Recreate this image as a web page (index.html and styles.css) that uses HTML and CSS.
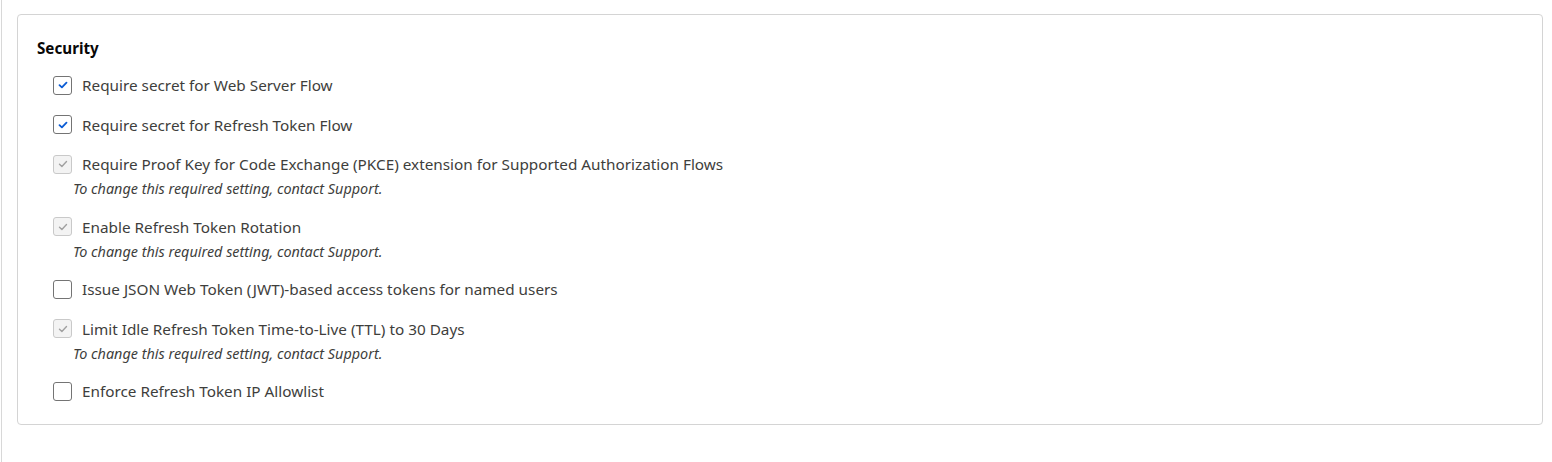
FILE: index.html
```html
<!DOCTYPE html>
<html lang="en">
<head>
    <meta charset="UTF-8">
    <meta name="viewport" content="width=device-width, initial-scale=1.0">
    <title>Security</title>
    <link rel="stylesheet" href="styles.css">
</head>
<body>
    <div class="page">
        <div class="card">
            <h2>Security</h2>

            <div class="options">
                <div class="option">
                    <label class="row">
                        <span class="box checked">
                            <svg viewBox="0 0 10 8"><path d="M1.5 4.2 L3.9 6.4 L8.5 1.6"/></svg>
                        </span>
                        Require secret for Web Server Flow
                    </label>
                </div>

                <div class="option">
                    <label class="row">
                        <span class="box checked">
                            <svg viewBox="0 0 10 8"><path d="M1.5 4.2 L3.9 6.4 L8.5 1.6"/></svg>
                        </span>
                        Require secret for Refresh Token Flow
                    </label>
                </div>

                <div class="option">
                    <label class="row">
                        <span class="box disabled">
                            <svg viewBox="0 0 10 8"><path d="M1.5 4.2 L3.9 6.4 L8.5 1.6"/></svg>
                        </span>
                        Require Proof Key for Code Exchange (PKCE) extension for Supported Authorization Flows
                    </label>
                    <p class="help">To change this required setting, contact Support.</p>
                </div>

                <div class="option">
                    <label class="row">
                        <span class="box disabled">
                            <svg viewBox="0 0 10 8"><path d="M1.5 4.2 L3.9 6.4 L8.5 1.6"/></svg>
                        </span>
                        Enable Refresh Token Rotation
                    </label>
                    <p class="help">To change this required setting, contact Support.</p>
                </div>

                <div class="option">
                    <label class="row">
                        <span class="box"></span>
                        Issue JSON Web Token (JWT)-based access tokens for named users
                    </label>
                </div>

                <div class="option">
                    <label class="row">
                        <span class="box disabled">
                            <svg viewBox="0 0 10 8"><path d="M1.5 4.2 L3.9 6.4 L8.5 1.6"/></svg>
                        </span>
                        Limit Idle Refresh Token Time-to-Live (TTL) to 30 Days
                    </label>
                    <p class="help">To change this required setting, contact Support.</p>
                </div>

                <div class="option">
                    <label class="row">
                        <span class="box"></span>
                        Enforce Refresh Token IP Allowlist
                    </label>
                </div>
            </div>
        </div>
    </div>
</body>
</html>
```

FILE: styles.css
```css
body {
    margin: 0;
    padding-left: 1px;
    font-family: 'Noto Sans', 'Open Sans', sans-serif;
    color: #3e3e3c;
    background-color: white;
}

.page {
    min-height: 462px;
    box-sizing: border-box;
    border-left: 1px solid #d8d8d8;
    padding: 14px 9px 0 15px;
}

.card {
    border: 1px solid #d4d4d4;
    border-radius: 4px;
    padding: 23px 19px 22px 19px;
}

h2 {
    margin: 0 0 16px 0;
    font-size: 15.2px;
    line-height: 20px;
    font-weight: bold;
    color: #080707;
}

.options {
    display: flex;
    flex-direction: column;
    gap: 17.5px;
    padding-left: 16px;
}

.row {
    display: flex;
    align-items: center;
    height: 22px;
    font-size: 15.3px;
}

.box {
    width: 19px;
    height: 19px;
    box-sizing: border-box;
    border: 1px solid #747474;
    border-radius: 3px;
    margin-right: 10px;
    display: flex;
    align-items: center;
    justify-content: center;
}

.box svg {
    width: 10px;
    height: 8px;
    fill: none;
    stroke: #0b5cd5;
    stroke-width: 1.8;
    stroke-linecap: round;
    stroke-linejoin: round;
}

.box.disabled {
    border-color: #c9c9c9;
    background-color: #f3f3f3;
}

.box.disabled svg {
    stroke: #a0a0a0;
    stroke-width: 1.4;
}

.help {
    margin: 4px 0 0 20px;
    font-size: 14.4px;
    line-height: 19px;
    font-style: italic;
    color: #3e3e3c;
}
```
